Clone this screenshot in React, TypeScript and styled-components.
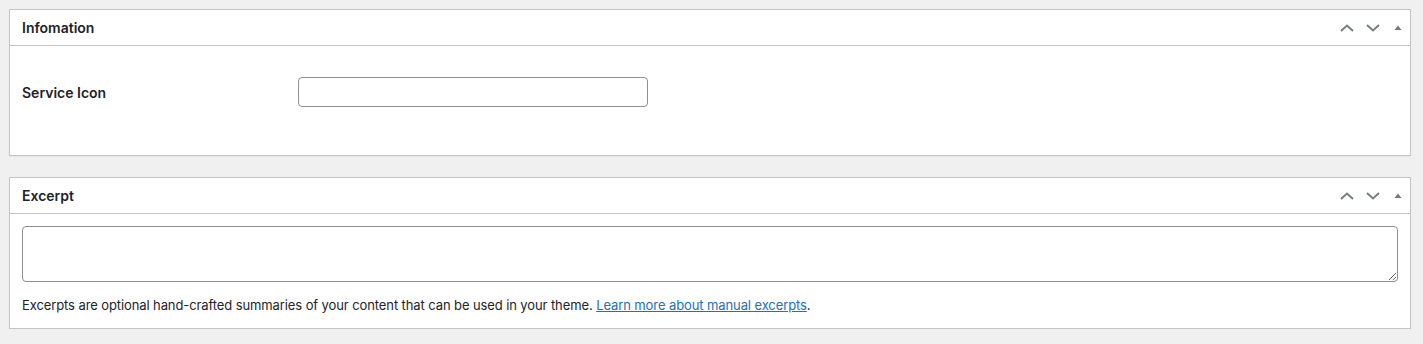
import React from 'react';
import styled, { createGlobalStyle } from 'styled-components';

const GlobalStyle = createGlobalStyle`
  html, body {
    margin: 0;
    padding: 0;
    background: #f0f0f1;
  }
  body {
    font-family: Inter, Roboto, 'Noto Sans', sans-serif;
    color: #1d2327;
    font-size: 13px;
  }
`;

const Page = styled.div`
  display: flex;
  flex-direction: column;
  gap: 21px;
  padding: 9px 12px 0 9px;
`;

const Postbox = styled.div`
  box-sizing: border-box;
  background: #ffffff;
  border: 1px solid #c3c4c7;
  box-shadow: 0 1px 1px rgba(0, 0, 0, 0.04);
`;

const Header = styled.div`
  display: flex;
  align-items: center;
  justify-content: space-between;
  height: 35px;
  border-bottom: 1px solid #c3c4c7;
`;

const Title = styled.h2`
  margin: 0;
  padding: 0 12px;
  font-size: 14px;
  font-weight: 600;
  line-height: 1.4;
  color: #1d2327;
`;

const Actions = styled.div`
  display: flex;
  align-items: center;
  height: 100%;
`;

const HandleBtn = styled.button<{ $w: number }>`
  display: flex;
  align-items: center;
  justify-content: center;
  width: ${(p) => p.$w}px;
  height: 100%;
  padding: 0;
  border: none;
  background: transparent;
  color: #787c82;
  cursor: pointer;
`;

const Inside = styled.div<{ $pt: number; $pb: number }>`
  padding: ${(p) => p.$pt}px 12px ${(p) => p.$pb}px 12px;
`;

const FieldRow = styled.div`
  display: flex;
  align-items: center;
`;

const Label = styled.label`
  width: 276px;
  font-size: 14px;
  font-weight: 600;
  color: #1d2327;
`;

const TextInput = styled.input`
  box-sizing: border-box;
  width: 350px;
  height: 30px;
  padding: 0 8px;
  border: 1px solid #8c8f94;
  border-radius: 4px;
  background: #fff;
  font-size: 14px;
  outline: none;
`;

const TextArea = styled.textarea`
  display: block;
  box-sizing: border-box;
  width: 100%;
  height: 56px;
  padding: 2px 6px;
  border: 1px solid #8c8f94;
  border-radius: 4px;
  background: #fff;
  font-family: inherit;
  font-size: 14px;
  outline: none;
`;

const Note = styled.p`
  margin: 14px 0 0;
  font-size: 13px;
  line-height: 1.5;
  letter-spacing: -0.1px;
  color: #1d2327;
`;

const Link = styled.a`
  color: #2271b1;
  text-decoration: underline;
`;

const Chevron = ({ up }: { up?: boolean }) => (
  <svg width="14" height="8" viewBox="0 0 14 8" fill="none">
    <path
      d={up ? 'M1 7 L7 1.5 L13 7' : 'M1 1 L7 6.5 L13 1'}
      stroke="currentColor"
      strokeWidth="2"
    />
  </svg>
);

const Caret = () => (
  <svg width="8" height="5" viewBox="0 0 8 5">
    <path d="M0.5 5 L4 0.5 L7.5 5 Z" fill="currentColor" />
  </svg>
);

const BoxHeader = ({ title }: { title: string }) => (
  <Header>
    <Title>{title}</Title>
    <Actions>
      <HandleBtn $w={26} aria-label="Move up">
        <Chevron up />
      </HandleBtn>
      <HandleBtn $w={26} aria-label="Move down">
        <Chevron />
      </HandleBtn>
      <HandleBtn $w={24} aria-label="Toggle panel">
        <Caret />
      </HandleBtn>
    </Actions>
  </Header>
);

export default function App() {
  return (
    <>
      <GlobalStyle />
      <Page>
        <Postbox>
          <BoxHeader title="Infomation" />
          <Inside $pt={31} $pb={48}>
            <FieldRow>
              <Label>Service Icon</Label>
              <TextInput type="text" />
            </FieldRow>
          </Inside>
        </Postbox>
        <Postbox>
          <BoxHeader title="Excerpt" />
          <Inside $pt={12} $pb={12}>
            <TextArea />
            <Note>
              Excerpts are optional hand-crafted summaries of your content that can be used in your
              theme. <Link href="#">Learn more about manual excerpts</Link>.
            </Note>
          </Inside>
        </Postbox>
      </Page>
    </>
  );
}
